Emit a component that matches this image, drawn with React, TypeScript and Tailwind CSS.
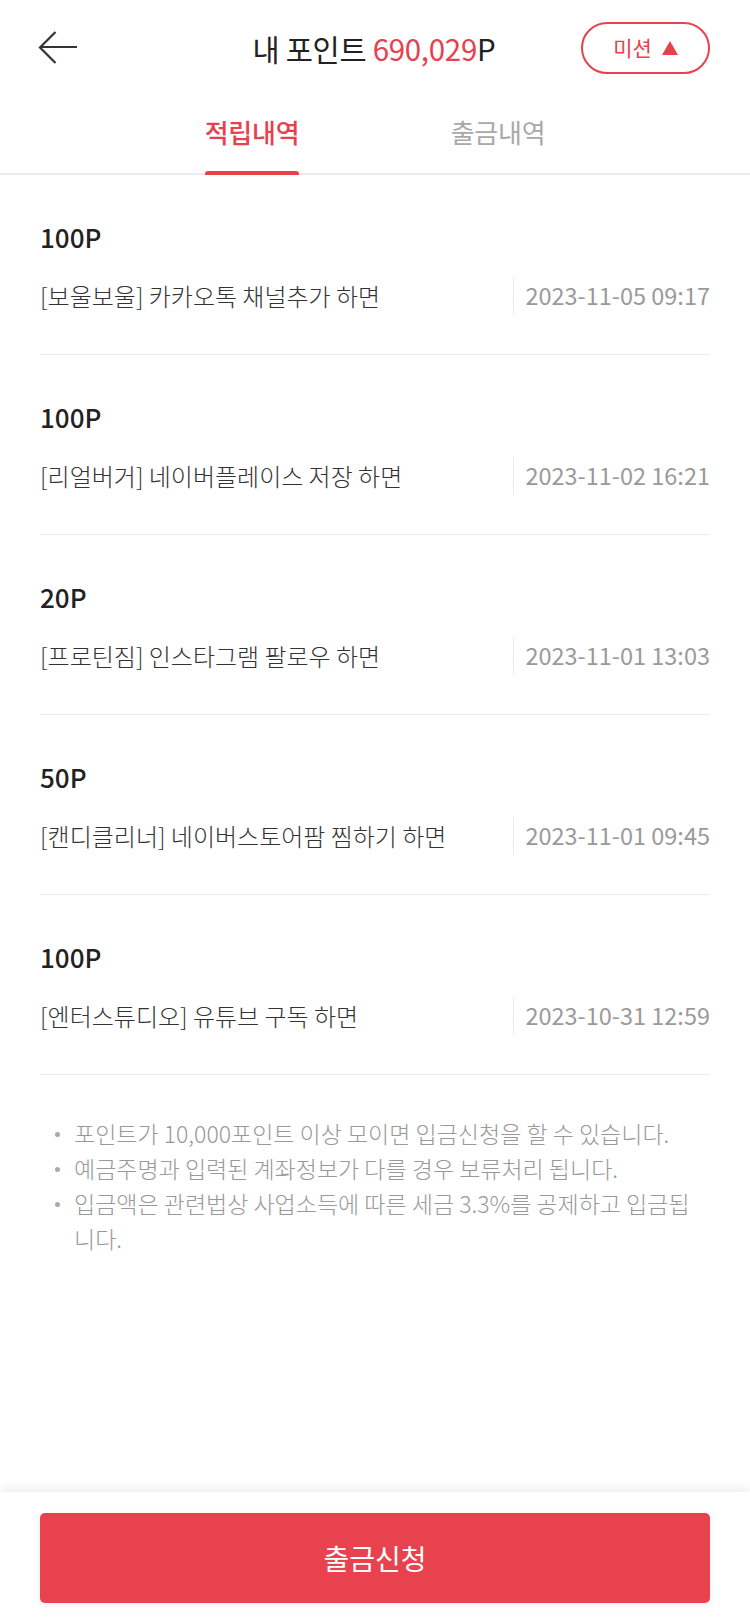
import React from "react";

const rows = [
  { p: "100P", d: "[보울보울] 카카오톡 채널추가 하면", t: "2023-11-05 09:17" },
  { p: "100P", d: "[리얼버거] 네이버플레이스 저장 하면", t: "2023-11-02 16:21" },
  { p: "20P", d: "[프로틴짐] 인스타그램 팔로우 하면", t: "2023-11-01 13:03" },
  { p: "50P", d: "[캔디클리너] 네이버스토어팜 찜하기 하면", t: "2023-11-01 09:45" },
  { p: "100P", d: "[엔터스튜디오] 유튜브 구독 하면", t: "2023-10-31 12:59" },
];

const notes = [
  "포인트가 10,000포인트 이상 모이면 입금신청을 할 수 있습니다.",
  "예금주명과 입력된 계좌정보가 다를 경우 보류처리 됩니다.",
  "입금액은 관련법상 사업소득에 따른 세금 3.3%를 공제하고 입금됩니다.",
];

export default function App() {
  return (
    <div
      className="w-[750px] min-h-[1623px] flex flex-col bg-white"
      style={{ fontFamily: '"Noto Sans CJK KR", "Noto Sans", sans-serif' }}
    >
      {/* header */}
      <div className="h-[96px] grid grid-cols-[1fr_auto_1fr] items-center pl-[38px] pr-[40px]">
        <svg width="40" height="34" viewBox="0 0 40 34" fill="none" className="shrink-0">
          <path d="M39 16H2.5" stroke="#333" strokeWidth="2.2" />
          <path d="M17.5 1L2 16.5L17.5 32" stroke="#333" strokeWidth="2.2" strokeLinejoin="miter" />
        </svg>
        <div className="text-[29.5px] leading-[36px] text-[#222] tracking-[-0.01em]">
          내 포인트 <span className="text-[#e8414e]">690,029</span>P
        </div>
        <div className="justify-self-end w-[129px] h-[52px] rounded-full border-2 border-[#e8414e] flex items-center justify-center gap-[10px] text-[#e8414e] text-[21px]">
          <span>미션</span>
          <svg width="16" height="14" viewBox="0 0 16 14">
            <path d="M8 0L16 14H0Z" fill="#e8414e" />
          </svg>
        </div>
      </div>

      {/* tabs */}
      <div className="h-[79px] flex justify-center border-b-2 border-[#ececec]">
        <div className="w-[246px] flex justify-center">
          <div className="flex flex-col items-center justify-end">
            <div className="text-[26px] leading-[36px] text-[#e8414e] font-medium mb-[21px] tracking-[-0.01em]">적립내역</div>
            <div className="h-[4px] w-full bg-[#e8414e] rounded-t-[3px] -mb-[2px]" />
          </div>
        </div>
        <div className="w-[246px] flex justify-center">
          <div className="flex flex-col items-center justify-end">
            <div className="text-[26px] leading-[36px] text-[#a8a8a8] mb-[21px] tracking-[-0.01em]">출금내역</div>
            <div className="h-[4px] w-full bg-transparent -mb-[2px]" />
          </div>
        </div>
      </div>

      {/* list */}
      <div className="px-[40px]">
        {rows.map((r, i) => (
          <div key={i} className="pt-[44px] pb-[39px] border-b border-[#ebebeb]">
            <div className="text-[26px] leading-[36px] text-[#222] font-medium">{r.p}</div>
            <div className="mt-[22px] flex items-center h-[38px]">
              <div className="flex-1 text-[24px] leading-[36px] text-[#333] font-light">{r.d}</div>
              <div className="w-[197px] h-[38px] border-l border-[#ebebeb] flex items-center justify-end text-[23.5px] text-[#9a9a9a]">
                {r.t}
              </div>
            </div>
          </div>
        ))}
      </div>

      {/* notes */}
      <div className="px-[40px] pt-[41px] flex-1">
        {notes.map((n, i) => (
          <div key={i} className="flex text-[23px] leading-[35px] text-[#999] font-light">
            <div className="w-[34px] shrink-0 flex pt-[16px] pl-[15px]">
              <div className="w-[5px] h-[5px] rounded-full bg-[#aaa]" />
            </div>
            <div className="flex-1">{n}</div>
          </div>
        ))}
      </div>

      {/* bottom */}
      <div className="h-[131px] px-[40px] pt-[21px] shadow-[0_-4px_10px_rgba(0,0,0,0.07)] bg-white">
        <div className="h-[90px] rounded-[5px] bg-[#e8424f] flex items-center justify-center text-white text-[28px] shadow-[0_2px_6px_rgba(0,0,0,0.08)]">
          출금신청
        </div>
      </div>
    </div>
  );
}
